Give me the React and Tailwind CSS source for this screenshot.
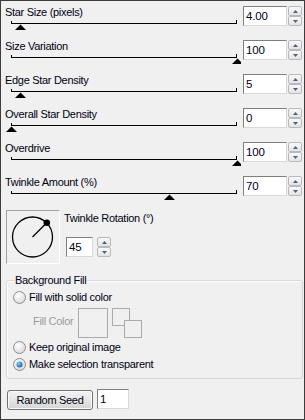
import React from "react";

const rows = [
  { label: "Star Size (pixels)", value: "4.00", x: 19.5 },
  { label: "Size Variation", value: "100", x: 236.5 },
  { label: "Edge Star Density", value: "5", x: 19.5 },
  { label: "Overall Star Density", value: "0", x: 10.5 },
  { label: "Overdrive", value: "100", x: 236.5 },
  { label: "Twinkle Amount (%)", value: "70", x: 168.5 },
];

function Spin() {
  return (
    <div className="flex flex-col w-[14px] h-[20px]">
      <div className="h-[10px] border border-[#b9b9b9] rounded-[2px] bg-linear-to-b from-[#f8f8f8] to-[#e4e4e4] flex items-center justify-center">
        <svg width="5" height="3" className="block">
          <path d="M0 3 L2.5 0 L5 3 Z" fill="#4e5e80" />
        </svg>
      </div>
      <div className="h-[10px] border border-[#b9b9b9] rounded-[2px] bg-linear-to-b from-[#f8f8f8] to-[#e4e4e4] flex items-center justify-center">
        <svg width="5" height="3" className="block">
          <path d="M0 0 L2.5 3 L5 0 Z" fill="#4e5e80" />
        </svg>
      </div>
    </div>
  );
}

function Field({ value, w }) {
  return (
    <div
      className={`${w} h-[20px] bg-white border border-t-[#7f7f7f] border-l-[#7f7f7f] border-r-[#d9d9d9] border-b-[#d9d9d9] pl-[2px] text-[11.5px] leading-[18px] tracking-[-0.2px] text-[#000018]`}
    >
      {value}
    </div>
  );
}

function Radio({ checked }) {
  return (
    <svg width="13" height="13" className="block shrink-0">
      <defs>
        <radialGradient id="rg" cx="40%" cy="35%" r="70%">
          <stop offset="0%" stopColor="#ffffff" />
          <stop offset="100%" stopColor="#d6d6d6" />
        </radialGradient>
        <radialGradient id="rd" cx="40%" cy="35%" r="70%">
          <stop offset="0%" stopColor="#7fd0f5" />
          <stop offset="100%" stopColor="#0f5ea8" />
        </radialGradient>
      </defs>
      <circle cx="6.5" cy="6.5" r="6" fill="url(#rg)" stroke="#8e8f8f" strokeWidth="1" />
      {checked && <circle cx="6.5" cy="6.5" r="3" fill="url(#rd)" />}
    </svg>
  );
}

export default function App() {
  return (
    <div className="w-[305px] h-[420px] bg-[#f0f0f0] border border-[#3c3c3c] font-['Liberation_Sans',Arial,sans-serif] text-[11px] tracking-[-0.3px] text-[#000010] overflow-hidden">
      {rows.map((r) => (
        <div key={r.label} className="flex h-[34px] items-start">
          <div className="w-[242px]">
            <div className="mt-[5px] pl-[4px] leading-[13px] h-[13px] whitespace-nowrap">{r.label}</div>
            <svg width="240" height="12" className="block">
              <line x1="10" y1="4.5" x2="236" y2="4.5" stroke="#000" />
              <line x1="10.5" y1="2" x2="10.5" y2="5" stroke="#000" />
              <line x1="235.5" y1="1" x2="235.5" y2="5" stroke="#000" />
              <polygon points={`${r.x - 5.5},11 ${r.x},5.5 ${r.x + 5.5},11`} fill="#000" />
            </svg>
          </div>
          <div className="mt-[5px] flex">
            <Field value={r.value} w="w-[44px]" />
            <div className="ml-[1px]">
              <Spin />
            </div>
          </div>
        </div>
      ))}

      <div className="flex h-[75px] items-start">
        <div className="ml-[5px] mt-[5px] w-[54px] h-[54px] border border-t-[#a0a0a0] border-l-[#a0a0a0] border-r-white border-b-white">
          <svg width="52" height="52" className="block">
            <circle cx="25.5" cy="26" r="20" fill="none" stroke="#000" strokeWidth="1.3" />
            <line x1="25.5" y1="26" x2="39.5" y2="12" stroke="#000" strokeWidth="1.3" />
            <circle cx="39.8" cy="11.8" r="3.3" fill="#000" />
          </svg>
        </div>
        <div className="ml-[4px] mt-[7px]">
          <div className="leading-[13px] h-[13px] whitespace-nowrap">Twinkle Rotation (°)</div>
          <div className="mt-[12px] ml-[2px] flex">
            <Field value="45" w="w-[27px]" />
            <div className="ml-[4px]">
              <Spin />
            </div>
          </div>
        </div>
      </div>

      <div className="ml-[5px] w-[297px] h-[99px] border border-[#d5d8dc] rounded-[3px] relative shadow-[inset_1px_1px_0_#ffffff]">
        <div className="absolute left-[7px] top-[-7px] px-[1px] bg-[#f0f0f0] leading-[13px] whitespace-nowrap">
          Background Fill
        </div>
        <div className="pt-[10px] pl-[6px]">
          <div className="flex items-center h-[13px]">
            <Radio />
            <span className="ml-[3px] leading-[13px] whitespace-nowrap">Fill with solid color</span>
          </div>
          <div className="flex items-start mt-[4px] h-[30px]">
            <div className="ml-[20px] w-[45px] mt-[7px] leading-[13px] text-[#9a9a9a] whitespace-nowrap">Fill Color</div>
            <div className="w-[30px] h-[30px] border border-[#ababab]" />
            <div className="ml-[4px] w-[30px] h-[30px] relative">
              <div className="absolute left-0 top-0 w-[18px] h-[18px] border border-[#ababab]" />
              <div className="absolute left-[12px] top-[12px] w-[18px] h-[18px] border border-[#ababab] bg-[#f0f0f0]" />
            </div>
          </div>
          <div className="flex items-center h-[13px] mt-[3px]">
            <Radio />
            <span className="ml-[3px] leading-[13px] whitespace-nowrap">Keep original image</span>
          </div>
          <div className="flex items-center h-[13px] mt-[4px]">
            <Radio checked />
            <span className="ml-[3px] leading-[13px] whitespace-nowrap">Make selection transparent</span>
          </div>
        </div>
      </div>

      <div className="flex items-start mt-[11px] ml-[6px]">
        <div className="w-[86px] h-[20px] border border-[#707070] rounded-[3px] bg-linear-to-b from-[#f2f2f2] via-[#e6e6e6] to-[#d4d4d4] flex items-center justify-center leading-[13px] whitespace-nowrap shadow-[inset_0_0_0_1px_#fbfbfb]">
          Random Seed
        </div>
        <div className="ml-[4px] -mt-[1px]">
          <Field value="1" w="w-[32px]" />
        </div>
      </div>
    </div>
  );
}
